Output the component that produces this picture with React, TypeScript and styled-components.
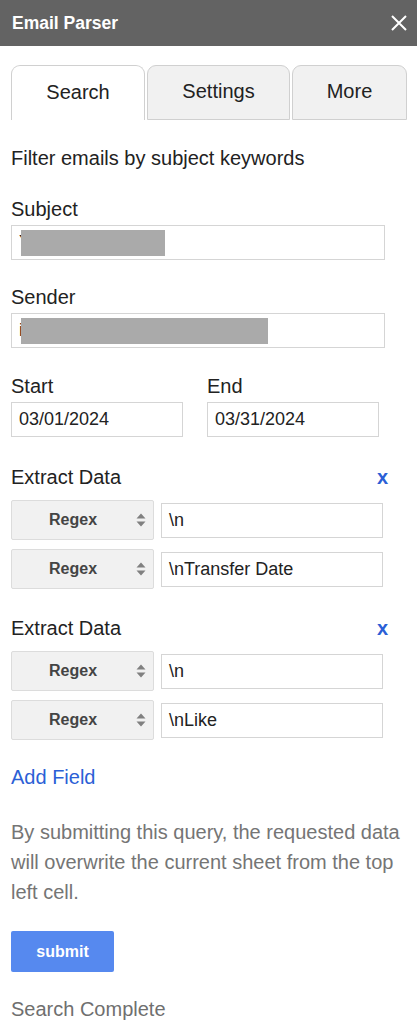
import styled, { createGlobalStyle } from 'styled-components'

const GlobalStyle = createGlobalStyle`
  body {
    margin: 0;
    background: #fff;
    font-family: "Liberation Sans", Arial, sans-serif;
    color: #222;
  }
`

const App = () => {
  return (
    <>
      <GlobalStyle />
      <Header>
        <Title>Email Parser</Title>
        <CloseBtn aria-label="close">
          <svg width="18" height="18" viewBox="0 0 18 18">
            <path d="M2 2 L16 16 M16 2 L2 16" stroke="#fff" strokeWidth="2" />
          </svg>
        </CloseBtn>
      </Header>
      <Tabs>
        <Tab $active $w={134}>Search</Tab>
        <Tab $w={143}>Settings</Tab>
        <Tab $w={115}>More</Tab>
      </Tabs>
      <Body>
        <Intro>Filter emails by subject keywords</Intro>

        <Label $top={29}>Subject</Label>
        <TextBox $w={374}>
          <Peek>Y</Peek>
          <Mask $w={144} />
        </TextBox>

        <Label $top={26}>Sender</Label>
        <TextBox $w={374}>
          <Peek>i</Peek>
          <Mask $w={247} />
        </TextBox>

        <DateRow>
          <DateCol>
            <Label $top={0}>Start</Label>
            <TextBox $w={172}>03/01/2024</TextBox>
          </DateCol>
          <DateCol>
            <Label $top={0}>End</Label>
            <TextBox $w={172}>03/31/2024</TextBox>
          </DateCol>
        </DateRow>

        <ExtractBlock rows={['\\n', '\\nTransfer Date']} />
        <ExtractBlock rows={['\\n', '\\nLike']} />

        <AddField>Add Field</AddField>
        <Note>
          By submitting this query, the requested data will overwrite the current sheet from the top
          left cell.
        </Note>
        <Submit>submit</Submit>
        <Status>Search Complete</Status>
      </Body>
    </>
  )
}

const ExtractBlock = ({ rows }: { rows: string[] }) => (
  <Extract>
    <ExtractHead>
      <span>Extract Data</span>
      <Remove>x</Remove>
    </ExtractHead>
    {rows.map((r, i) => (
      <FieldRow key={i}>
        <Select>
          <span>Regex</span>
          <svg width="10" height="16" viewBox="0 0 10 16">
            <path d="M0.5 6.5 L5 1.5 L9.5 6.5 Z M0.5 9.5 L5 14.5 L9.5 9.5 Z" fill="#808080" />
          </svg>
        </Select>
        <TextBox $w={222}>{r}</TextBox>
      </FieldRow>
    ))}
  </Extract>
)

export default App

const Header = styled.div`
  height: 46px;
  background: #636363;
  display: flex;
  align-items: center;
  justify-content: space-between;
  padding: 0 9px 0 12px;
`
const Title = styled.div`
  color: #fff;
  font-weight: bold;
  font-size: 17.5px;
`
const CloseBtn = styled.div`
  display: flex;
  align-items: center;
`
const Tabs = styled.div`
  display: flex;
  gap: 2px;
  padding: 19px 0 0 11px;
  height: 55px;
  box-sizing: content-box;
`
const Tab = styled.div<{ $active?: boolean; $w: number }>`
  width: ${p => p.$w}px;
  box-sizing: border-box;
  border: 1px solid #d0d0d0;
  border-bottom: ${p => (p.$active ? 'none' : '1px solid #d0d0d0')};
  border-radius: 9px 9px 0 0;
  background: ${p => (p.$active ? '#fff' : '#f1f1f1')};
  display: flex;
  align-items: center;
  justify-content: center;
  font-size: 20px;
  color: #222;
  padding-bottom: 2px;
`
const Body = styled.div`
  padding: 0 11px;
`
const Intro = styled.div`
  font-size: 20px;
  line-height: 22px;
  margin-top: 27px;
`
const Label = styled.div<{ $top: number }>`
  font-size: 20px;
  line-height: 22px;
  margin-top: ${p => p.$top}px;
  margin-bottom: 5px;
`
const TextBox = styled.div<{ $w: number }>`
  width: ${p => p.$w}px;
  height: 35px;
  box-sizing: border-box;
  border: 1px solid #d5d5d5;
  background: #fff;
  display: flex;
  align-items: center;
  padding: 0 7px;
  font-size: 18px;
  color: #222;
  overflow: hidden;
`
const Peek = styled.span`
  display: inline-block;
  width: 2px;
  overflow: hidden;
  font-size: 18px;
  color: #222;
`
const Mask = styled.div<{ $w: number }>`
  width: ${p => p.$w}px;
  height: 26px;
  background: #aaa;
  flex-shrink: 0;
`
const DateRow = styled.div`
  display: flex;
  gap: 24px;
  margin-top: 27px;
`
const DateCol = styled.div`
  display: flex;
  flex-direction: column;
`
const Extract = styled.div`
  margin-top: 29px;
  display: flex;
  flex-direction: column;
  gap: 9px;
  & + & {
    margin-top: 28px;
  }
`
const ExtractHead = styled.div`
  display: flex;
  justify-content: space-between;
  align-items: center;
  font-size: 20px;
  line-height: 22px;
  width: 377px;
  margin-bottom: 3px;
`
const Remove = styled.span`
  color: #2b5fd6;
  font-size: 20px;
  font-weight: bold;
`
const FieldRow = styled.div`
  display: flex;
  align-items: center;
  gap: 7px;
`
const Select = styled.div`
  width: 143px;
  height: 40px;
  box-sizing: border-box;
  border: 1px solid #dcdcdc;
  border-radius: 2px;
  background: #f1f1f1;
  display: flex;
  align-items: center;
  justify-content: space-between;
  padding: 0 7px 0 37px;
  font-size: 16px;
  font-weight: bold;
  color: #444;
`
const AddField = styled.div`
  color: #2b5fd6;
  font-size: 20px;
  line-height: 22px;
  margin-top: 26px;
`
const Note = styled.div`
  color: #757575;
  font-size: 20px;
  line-height: 30px;
  margin-top: 29px;
`
const Submit = styled.div`
  width: 103px;
  height: 41px;
  margin-top: 24px;
  background: #5689ef;
  border-radius: 2px;
  color: #fff;
  font-weight: bold;
  font-size: 16px;
  display: flex;
  align-items: center;
  justify-content: center;
`
const Status = styled.div`
  color: #6f6f6f;
  font-size: 20px;
  line-height: 22px;
  margin-top: 26px;
`
